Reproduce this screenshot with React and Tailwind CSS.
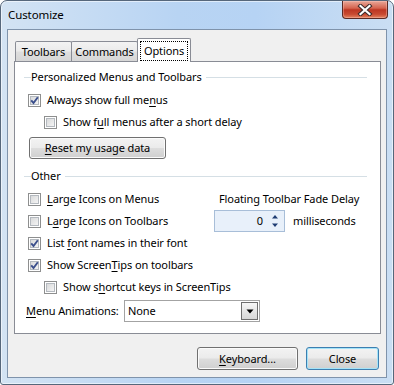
import React from "react";

const U = ({ children }) => (
  <span className="underline underline-offset-[2px] decoration-1">{children}</span>
);

function Check({ checked }) {
  return (
    <div className="relative w-[13px] h-[13px] shrink-0 border border-[#8e8f8f] bg-white p-[1px]">
      <div className="w-full h-full border border-[#b4b9bf] bg-[linear-gradient(135deg,#d9dadb,#f4f4f4)]" />
      {checked && (
        <svg className="absolute left-[-1px] top-[-1px]" width="13" height="13" viewBox="0 0 13 13">
          <path d="M3.2 6.4 L5.5 9 L9.8 3.2" stroke="#3b4f8c" strokeWidth="1.9" fill="none" strokeLinejoin="miter" />
        </svg>
      )}
    </div>
  );
}

function CheckRow({ checked, indent, children }) {
  return (
    <div className={indent ? "flex items-center h-[22px] pl-[20px]" : "flex items-center h-[22px] pl-[4px]"}>
      <Check checked={checked} />
      <span className="ml-[6px] whitespace-nowrap">{children}</span>
    </div>
  );
}

function GroupHeader({ children }) {
  return (
    <div className="flex items-center h-[16px]">
      <div className="w-[7px] h-px bg-[#d5dfe5]" />
      <span className="pl-[0px] pr-[4px] whitespace-nowrap">{children}</span>
      <div className="flex-1 h-px bg-[#d5dfe5]" />
    </div>
  );
}

function Btn({ children, className, isDefault }) {
  return (
    <div
      className={
        (isDefault
          ? "border-[#3c7fb1] shadow-[inset_0_0_0_1px_#a4e3f8] "
          : "border-[#707070] shadow-[inset_0_0_0_1px_#fbfbfb] ") +
        "flex items-center justify-center rounded-[3px] border bg-[linear-gradient(#f3f3f3,#ebebeb_48%,#dddddd_52%,#cfcfcf)] " +
        className
      }
    >
      {children}
    </div>
  );
}

export default function App() {
  return (
    <div className="w-[394px] h-[385px] bg-white font-['Noto_Sans',sans-serif] text-[11px] tracking-[-0.1px] leading-[16px] text-black">
      <div className="w-[394px] h-[385px] flex flex-col rounded-t-[7px] rounded-b-[3px] border border-[#56677b] px-[6px] pb-[6px] bg-[linear-gradient(to_right,#d3e3f3,#b8d4f3_45%,#b6d3f4_65%,#cadef3)] shadow-[inset_0_0_0_1px_rgba(255,255,255,0.55)]">
        {/* title bar */}
        <div className="h-[28px] flex items-start justify-between">
          <div className="pl-[1px] pt-[6px] text-[11.5px] leading-[16px] text-black">Customize</div>
          <div className="w-[46px] h-[18px] mr-[-1px] rounded-b-[4px] border border-t-0 border-[#5a2a24] bg-[linear-gradient(#e9a899,#d5644f_42%,#bd3622_52%,#c84a31_78%,#e58460)] shadow-[inset_0_0_0_1px_rgba(255,210,200,0.35)] flex items-center justify-center">
            <svg width="16" height="12" viewBox="0 0 16 12">
              <path d="M3.5 2 L12.5 10 M12.5 2 L3.5 10" stroke="#3b2a2a" strokeWidth="4.2" strokeLinecap="square" fill="none" />
              <path d="M3.5 2 L12.5 10 M12.5 2 L3.5 10" stroke="#ffffff" strokeWidth="2.2" strokeLinecap="square" fill="none" />
            </svg>
          </div>
        </div>

        {/* client area */}
        <div className="flex-1 flex flex-col border border-[#7f93ab] bg-[#f0f0f0]">
          {/* tabs */}
          <div className="h-[23px] mt-[8px] ml-[7px] flex items-end">
            <div className="w-[57px] h-[20px] border border-b-0 border-[#898c95] rounded-t-[2px] bg-[linear-gradient(#f3f3f3,#ebebeb_45%,#dedede_55%,#d6d6d6)] flex items-center justify-center">
              Toolbars
            </div>
            <div className="w-[67px] h-[20px] ml-[-1px] border border-b-0 border-[#898c95] rounded-t-[2px] bg-[linear-gradient(#f3f3f3,#ebebeb_45%,#dedede_55%,#d6d6d6)] flex items-center justify-center">
              Commands
            </div>
            <div className="relative z-10 w-[54px] h-[24px] ml-[-1px] mb-[-1px] border border-b-0 border-[#898c95] rounded-t-[2px] bg-white pt-[2px] px-[2px]">
              <div className="h-[20px] border border-dotted border-black flex items-center justify-center">
                Options
              </div>
            </div>
          </div>

          {/* panel */}
          <div className="ml-[6px] w-[367px] h-[273px] border border-[#898c95] bg-white pl-[9px] pr-[13px] pt-[7px]">
            <GroupHeader>Personalized Menus and Toolbars</GroupHeader>
            <div className="mt-[4px]">
              <CheckRow checked>
                Always show full me<U>n</U>us
              </CheckRow>
              <CheckRow indent>
                Show f<U>u</U>ll menus after a short delay
              </CheckRow>
            </div>
            <div className="mt-[4px] ml-[5px]">
              <Btn className="w-[137px] h-[22px]">
                <span>
                  <U>R</U>eset my usage data
                </span>
              </Btn>
            </div>

            <div className="mt-[9px]">
              <GroupHeader>Other</GroupHeader>
            </div>
            <div className="mt-[4px]">
              <div className="flex items-center h-[22px]">
                <div className="w-[190px]">
                  <CheckRow>
                    <U>L</U>arge Icons on Menus
                  </CheckRow>
                </div>
                <span className="ml-[5px] whitespace-nowrap">Floating Toolbar Fade Delay</span>
              </div>
              <div className="flex items-center h-[22px]">
                <div className="w-[190px]">
                  <CheckRow>
                    L<U>a</U>rge Icons on Toolbars
                  </CheckRow>
                </div>
                <div className="relative w-[71px] h-[22px] border border-[#a8bed8] bg-[#e8f0fa]">
                  <span className="absolute right-[21px] top-[2px]">0</span>
                  <svg className="absolute right-[5px] top-[3px]" width="8" height="14" viewBox="0 0 8 14">
                    <path d="M4 1 L7 4.5 L1 4.5 Z" fill="#1f3c73" />
                    <path d="M1 9.5 L7 9.5 L4 13 Z" fill="#1f3c73" />
                  </svg>
                </div>
                <span className="ml-[8px] whitespace-nowrap">milliseconds</span>
              </div>
              <CheckRow checked>
                List <U>f</U>ont names in their font
              </CheckRow>
              <CheckRow checked>
                Show Screen<U>T</U>ips on toolbars
              </CheckRow>
              <CheckRow indent>
                Show s<U>h</U>ortcut keys in ScreenTips
              </CheckRow>
            </div>
            <div className="mt-[2px] flex items-center h-[22px]">
              <div className="w-[100px] pl-[2px] whitespace-nowrap">
                <U>M</U>enu Animations:
              </div>
              <div className="w-[136px] h-[22px] border border-[#a3a3a3] bg-white flex items-center justify-between pl-[3px] pr-[1px]">
                <span>None</span>
                <div className="w-[17px] h-[18px] border border-[#6f6f6f] bg-[linear-gradient(#f6f6f6,#e6e6e6_50%,#d8d8d8)] flex items-center justify-center">
                  <svg width="8" height="5" viewBox="0 0 8 5">
                    <path d="M0.5 0.5 L7.5 0.5 L4 4.5 Z" fill="#000" />
                  </svg>
                </div>
              </div>
            </div>
          </div>

          {/* bottom buttons */}
          <div className="mt-[13px] flex justify-end gap-[8px] pr-[7px]">
            <Btn className="w-[101px] h-[23px]">
              <span>
                <U>K</U>eyboard...
              </span>
            </Btn>
            <Btn isDefault className="w-[73px] h-[23px]">
              <span>Close</span>
            </Btn>
          </div>
        </div>
      </div>
    </div>
  );
}
